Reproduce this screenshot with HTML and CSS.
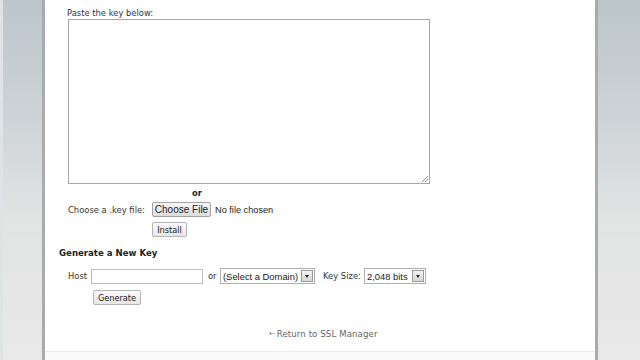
FILE: index.html
```html
<!DOCTYPE html>
<html>
<head>
<meta charset="utf-8">
<link rel="stylesheet" href="styles.css">
</head>
<body>
<div class="frame">
  <div class="side side-left"></div>
  <main class="main">
    <div class="paste-label">Paste the key below:</div>
    <div class="textarea"><span class="grip"></span></div>
    <div class="or-line">or</div>
    <div class="file-row">
      <span class="label file-label">Choose a .key file:</span>
      <span class="btn choose">Choose File</span>
      <span class="nofile">No file chosen</span>
    </div>
    <div class="install-row"><span class="btn small">Install</span></div>
    <h2 class="heading">Generate a New Key</h2>
    <div class="host-row">
      <span class="label host-label">Host</span>
      <span class="input"></span>
      <span class="label or2">or</span>
      <span class="select domain"><span class="sel-text">(Select a Domain)</span><span class="arrow"></span></span>
      <span class="label keysize">Key Size:</span>
      <span class="select bits"><span class="sel-text">2,048 bits</span><span class="arrow"></span></span>
    </div>
    <div class="gen-row"><span class="btn small">Generate</span></div>
    <div class="return-row"><span class="ret-arrow">&larr;</span><span class="ret-text">Return to SSL Manager</span></div>
    <div class="bottom-band"></div>
  </main>
  <div class="side side-right"></div>
</div>
</body>
</html>
```

FILE: styles.css
```css
html, body {
  margin: 0;
  padding: 0;
  width: 640px;
  height: 360px;
  overflow: hidden;
  background: #ffffff;
  font-family: "DejaVu Sans", Verdana, sans-serif;
}
.frame {
  display: flex;
  width: 640px;
  height: 360px;
}
.side {
  width: 42px;
  flex: none;
  background: linear-gradient(to bottom, #bcc6cb 0%, #ccd2d5 30%, #e2e3e3 60%, #e9e9e9 100%);
}
.side-left {
  border-right: 3px solid #a9abac;
  box-shadow: inset 3px 0 0 #dfe3e5;
}
.side-right {
  width: 42px;
  border-left: 3px solid #a9abac;
}
.main {
  flex: 1;
  position: relative;
  padding-left: 14px;
  color: #333;
  font-size: 8.4px;
}
.paste-label {
  margin-top: 8px;
  margin-left: 8px;
  height: 11px;
  line-height: 11px;
}
.textarea {
  position: relative;
  margin-left: 9px;
  width: 362px;
  height: 165px;
  box-sizing: border-box;
  border: 1px solid #a6a6a6;
  background: #fff;
}
.grip {
  position: absolute;
  right: 1px;
  bottom: 1px;
  width: 6px;
  height: 6px;
  background: linear-gradient(135deg, transparent 45%, #999 45%, #999 55%, transparent 55%, transparent 70%, #999 70%, #999 80%, transparent 80%);
}
.or-line {
  margin-top: 4px;
  margin-left: 133px;
  height: 10px;
  line-height: 10px;
  font-weight: bold;
  color: #222;
}
.file-row {
  display: flex;
  align-items: center;
  margin-top: 4px;
  margin-left: 9px;
  height: 15px;
}
.file-label {
  width: 84px;
}
.btn {
  display: inline-flex;
  align-items: center;
  justify-content: center;
  box-sizing: border-box;
  border: 1px solid #a3a3a3;
  border-radius: 2px;
  background: linear-gradient(to bottom, #f6f6f6, #dcdcdc);
  color: #222;
}
.choose {
  width: 59px;
  height: 15px;
  font-family: "Liberation Sans", Arial, sans-serif;
  font-size: 10px;
}
.nofile {
  margin-left: 4px;
  font-family: "Liberation Sans", Arial, sans-serif;
  font-size: 9.2px;
  color: #222;
}
.install-row {
  margin-top: 5px;
  margin-left: 93px;
  height: 15px;
  display: flex;
}
.small {
  height: 15px;
  padding: 0 4px;
  font-size: 8.2px;
  background: linear-gradient(to bottom, #fbfbfb, #e6e6e6);
  border-color: #b5b5b5;
}
.install-row .small { width: 35px; }
.heading {
  margin: 11px 0 0 0;
  font-size: 8.6px;
  font-weight: bold;
  color: #222;
  height: 10px;
  line-height: 10px;
}
.host-row {
  display: flex;
  align-items: center;
  margin-top: 10px;
  margin-left: 9px;
  height: 16px;
}
.host-label { width: 23px; }
.input {
  width: 112px;
  height: 15px;
  box-sizing: border-box;
  border: 1px solid #bdbdbd;
  background: #fff;
}
.or2 { margin-left: 5px; width: 12px; }
.select {
  display: inline-flex;
  align-items: center;
  height: 16px;
  box-sizing: border-box;
  border: 1px solid #b0b0b0;
  background: #fff;
  font-family: "Liberation Sans", Arial, sans-serif;
  font-size: 9.4px;
  color: #222;
  padding-left: 2px;
}
.sel-text { flex: 1; white-space: nowrap; }
.arrow {
  width: 12px;
  height: 12px;
  margin-right: 1px;
  box-sizing: border-box;
  border: 1px solid #9a9a9a;
  background: linear-gradient(to bottom, #f3f3f3, #d6d6d6);
  position: relative;
}
.arrow::after {
  content: "";
  position: absolute;
  left: 3px;
  top: 4px;
  border-left: 2.5px solid transparent;
  border-right: 2.5px solid transparent;
  border-top: 3px solid #222;
}
.domain { width: 95px; }
.keysize { margin-left: 8px; width: 41px; }
.bits { width: 62px; }
.gen-row {
  margin-top: 6px;
  margin-left: 34px;
  height: 15px;
  display: flex;
}
.gen-row .small { width: 48px; }
.return-row {
  margin-top: 23px;
  margin-left: 210px;
  display: flex;
  align-items: center;
  height: 11px;
  color: #666;
  font-size: 8.6px;
}
.ret-arrow {
  font-size: 8px;
  color: #888;
  margin-right: 1px;
}
.ret-text { letter-spacing: 0.1px; }
.bottom-band {
  position: absolute;
  left: 0;
  right: 0;
  bottom: 0;
  height: 8px;
  border-top: 1px solid #ececec;
  background: #fafafa;
}
```
